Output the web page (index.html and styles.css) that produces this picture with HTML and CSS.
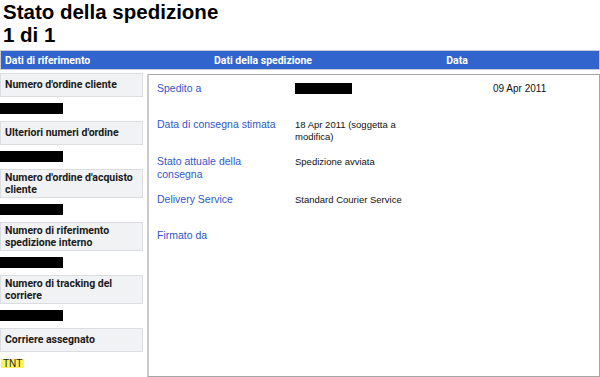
FILE: index.html
```html
<!DOCTYPE html>
<html lang="it">
<head>
<meta charset="utf-8">
<title>Stato della spedizione</title>
<link rel="stylesheet" href="styles.css">
</head>
<body>
<h1 class="title">Stato della spedizione<br>1 di 1</h1>
<div class="thead">
  <div class="th th-ref">Dati di riferimento</div>
  <div class="th th-ship">Dati della spedizione</div>
  <div class="th th-date">Data</div>
  <div class="th"></div>
</div>
<div class="tbody">
  <div class="refs">
    <div class="ref-label">Numero d'ordine cliente</div>
    <div class="ref-value"><span class="redact"></span></div>
    <div class="ref-label">Ulteriori numeri d'ordine</div>
    <div class="ref-value"><span class="redact"></span></div>
    <div class="ref-label">Numero d'ordine d'acquisto cliente</div>
    <div class="ref-value"><span class="redact"></span></div>
    <div class="ref-label">Numero di riferimento spedizione interno</div>
    <div class="ref-value"><span class="redact"></span></div>
    <div class="ref-label">Numero di tracking del corriere</div>
    <div class="ref-value"><span class="redact"></span></div>
    <div class="ref-label">Corriere assegnato</div>
    <div class="ref-value"><span class="mark">TNT</span></div>
  </div>
  <div class="panel">
    <div class="row">
      <div class="label">Spedito a</div>
      <div class="value"><span class="redact redact-wide"></span></div>
      <div class="date">09 Apr 2011</div>
    </div>
    <div class="row">
      <div class="label">Data di consegna stimata</div>
      <div class="value">18 Apr 2011 (soggetta a modifica)</div>
      <div class="date"></div>
    </div>
    <div class="row">
      <div class="label">Stato attuale della consegna</div>
      <div class="value">Spedizione avviata</div>
      <div class="date"></div>
    </div>
    <div class="row">
      <div class="label">Delivery Service</div>
      <div class="value">Standard Courier Service</div>
      <div class="date"></div>
    </div>
    <div class="row">
      <div class="label">Firmato da</div>
      <div class="value"></div>
      <div class="date"></div>
    </div>
  </div>
</div>
</body>
</html>
```
FILE: styles.css
```css
html, body {
  margin: 0;
  padding: 0;
  background: #fff;
}
body {
  font-family: "Liberation Sans", Arial, sans-serif;
  font-size: 10.5px;
  color: #111;
  width: 600px;
  height: 377px;
  overflow: hidden;
}
.title {
  margin: 0;
  padding: 0 0 0 3px;
  font-size: 20.5px;
  line-height: 23px;
  font-weight: bold;
  color: #000;
  height: 50px;
}
.thead {
  display: grid;
  grid-template-columns: 145px 234px 154px 1fr;
  height: 18px;
  background: #3165cd;
  border: 1px solid #c8ccd6;
  color: #fff;
  font-family: Roboto, "Liberation Sans", sans-serif;
  font-size: 10.5px;
  font-weight: bold;
  align-items: center;
}
.th-ref { padding-left: 4px; }
.th-ship, .th-date { text-align: center; }
.tbody {
  display: flex;
  gap: 4px;
  padding-top: 3px;
}
.refs {
  width: 143px;
  flex: none;
}
.ref-label {
  box-sizing: border-box;
  min-height: 24px;
  padding: 1.5px 4px;
  display: flex;
  align-items: center;
  background: #f1f2f4;
  border: 1px solid #dcdde0;
  font-family: Roboto, "Liberation Sans", sans-serif;
  font-size: 10.5px;
  font-weight: bold;
  line-height: 12px;
  color: #1a1a1a;
}
.ref-value {
  height: 11px;
  margin: 6px 0 7px;
  line-height: 11px;
}
.redact {
  display: inline-block;
  width: 63px;
  height: 11px;
  background: #000;
    vertical-align: top;
}
.redact-wide {
  width: 57px;
  height: 11px;
}
.mark {
  display: inline-block;
  background: #fff35c;
  padding: 0 2px;
  margin-left: 1px;
  margin-top: 1px;
  line-height: 9px;
  height: 9px;
  font-size: 10px;
  color: #222;
}
.panel {
  box-sizing: border-box;
  flex: 1;
  height: 303px;
  margin-top: 1px;
  border: 1px solid #a6a6a6;
  border-left: 2px solid #cbcbcf;
  padding: 7px 0 0 8px;
}
.row {
  display: grid;
  grid-template-columns: 138px 198px 1fr;
  align-items: start;
  min-height: 24px;
  padding-bottom: 12px;
}
.label {
  color: #3158c8;
  line-height: 13px;
  padding-right: 10px;
}
.value {
  font-size: 9.5px;
  line-height: 12px;
  padding-top: 1px;
  padding-right: 82px;
}
.date {
  font-size: 10px;
  line-height: 12px;
  padding-top: 1px;
}
```
